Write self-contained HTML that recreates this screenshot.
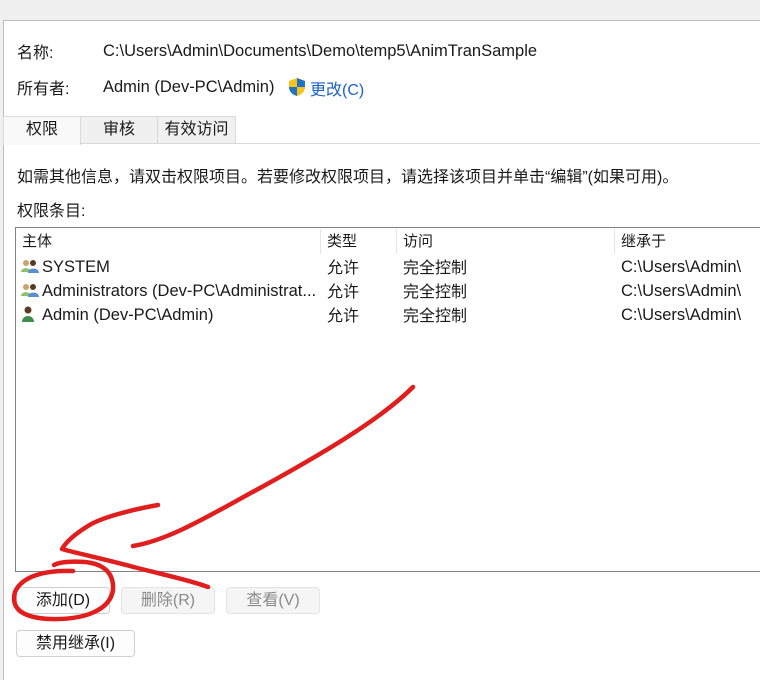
<!DOCTYPE html>
<html><head><meta charset="utf-8"><style>
*{margin:0;padding:0;box-sizing:border-box}
body{width:760px;height:667px;background:#f0f0f0;position:relative;overflow:hidden;font-family:"Liberation Sans","Noto Sans CJK SC",sans-serif;font-size:16px;color:#1a1a1a}
.a{position:absolute;white-space:nowrap}
.l{margin-top:3px;font-size:16.5px}
#win{position:absolute;left:3px;top:20px;width:760px;height:660px;background:#fff;border-left:1px solid #bdbdbd;border-top:1px solid #bdbdbd}
.tab{position:absolute;top:116px;height:27px;border:1px solid #d9d9d9;border-bottom:none;background:#f0f0f0;text-align:center;line-height:26px}
.btn{position:absolute;height:27px;border:1px solid #d0d0d0;border-radius:4px;background:#fdfdfd;text-align:center;line-height:25px}
.dis{color:#8a8a8a;background:#f5f5f5;border-color:#e3e3e3}
.sep{position:absolute;top:229px;width:1px;height:25px;background:#e5e5e5}
</style></head><body>
<div id="win"></div>
<div class="a" style="left:17px;top:39px">名称:</div>
<div class="a l" style="left:103px;top:39px">C:\Users\Admin\Documents\Demo\temp5\AnimTranSample</div>
<div class="a" style="left:17px;top:75px">所有者:</div>
<div class="a l" style="left:103px;top:75px">Admin (Dev-PC\Admin)</div>
<svg class="a" style="left:287px;top:77px" width="20" height="20" viewBox="0 0 20 20"><path d="M10 1 L18 4 V10 C18 15 14 18 10 19 C6 18 2 15 2 10 V4 Z" fill="#f6c21c"/><path d="M10 1 L18 4 V10 H10 Z M10 10 H2 C2 15 6 18 10 19 Z" fill="#1f72c8"/></svg>
<div class="a" style="left:310px;top:76px;color:#1a63c6">更改(C)</div>
<div style="position:absolute;left:3px;top:143px;width:760px;height:1px;background:#d9d9d9"></div>
<div class="tab" style="left:3px;width:78px;background:#f9f9f9;height:29px">权限</div>
<div class="tab" style="left:80px;width:78px">审核</div>
<div class="tab" style="left:157px;width:79px">有效访问</div>
<div class="a" style="left:17px;top:163px">如需其他信息，请双击权限项目。若要修改权限项目，请选择该项目并单击“编辑”(如果可用)。</div>
<div class="a" style="left:17px;top:197px">权限条目:</div>
<div style="position:absolute;left:15px;top:227px;width:760px;height:345px;border:1px solid #828282;background:#fff"></div>
<div class="sep" style="left:320px"></div><div class="sep" style="left:396px"></div><div class="sep" style="left:614px"></div>
<div class="a" style="left:22px;top:230px;font-size:15px">主体</div>
<div class="a" style="left:327px;top:230px;font-size:15px">类型</div>
<div class="a" style="left:403px;top:230px;font-size:15px">访问</div>
<div class="a" style="left:621px;top:230px;font-size:15px">继承于</div>
<svg class="a" style="left:20px;top:258px" width="20" height="16"><circle cx="6" cy="5" r="3" fill="#c9a36b"/><path d="M1 14 C1 9 11 9 11 14Z" fill="#8fbf6a"/><circle cx="13" cy="5" r="3" fill="#5a3a22"/><path d="M8 15 C8 9 19 9 19 15Z" fill="#5b8fd0"/></svg>
<svg class="a" style="left:20px;top:282px" width="20" height="16"><circle cx="6" cy="5" r="3" fill="#c9a36b"/><path d="M1 14 C1 9 11 9 11 14Z" fill="#8fbf6a"/><circle cx="13" cy="5" r="3" fill="#5a3a22"/><path d="M8 15 C8 9 19 9 19 15Z" fill="#5b8fd0"/></svg>
<svg class="a" style="left:20px;top:306px" width="20" height="16"><circle cx="8" cy="4" r="3.5" fill="#5a3a22"/><path d="M2 16 C2 8 14 8 14 16Z" fill="#3e8f4e"/></svg>
<div class="a l" style="left:42px;top:255px">SYSTEM</div>
<div class="a l" style="left:42px;top:279px">Administrators (Dev-PC\Administrat...</div>
<div class="a l" style="left:42px;top:303px">Admin (Dev-PC\Admin)</div>
<div class="a" style="left:327px;top:254px">允许</div><div class="a" style="left:327px;top:278px">允许</div><div class="a" style="left:327px;top:302px">允许</div>
<div class="a" style="left:403px;top:254px">完全控制</div><div class="a" style="left:403px;top:278px">完全控制</div><div class="a" style="left:403px;top:302px">完全控制</div>
<div class="a l" style="left:621px;top:255px">C:\Users\Admin\</div><div class="a l" style="left:621px;top:279px">C:\Users\Admin\</div><div class="a l" style="left:621px;top:303px">C:\Users\Admin\</div>
<div class="btn" style="left:16px;top:587px;width:94px">添加(D)</div>
<div class="btn dis" style="left:121px;top:587px;width:94px">删除(R)</div>
<div class="btn dis" style="left:226px;top:587px;width:94px">查看(V)</div>
<div class="btn" style="left:16px;top:630px;width:119px">禁用继承(I)</div>
<svg class="a" style="left:0;top:0" width="760" height="667" fill="none" stroke="#e01e1e" stroke-width="4.5" stroke-linecap="round" stroke-linejoin="round">
<path d="M413 387 C380 420 320 455 260 488 C210 515 170 540 133 546"/>
<path d="M158 505 C130 510 100 518 88 526 C75 534 66 542 62 549 C80 554 100 558 130 566 C160 574 190 580 208 587"/>
<path d="M73 571 C45 570 22 576 15 592 C10 610 25 618 50 619 C85 620 110 610 113 590 C114 574 105 564 85 562 C70 561 60 562 54 565"/>
</svg>
</body></html>
